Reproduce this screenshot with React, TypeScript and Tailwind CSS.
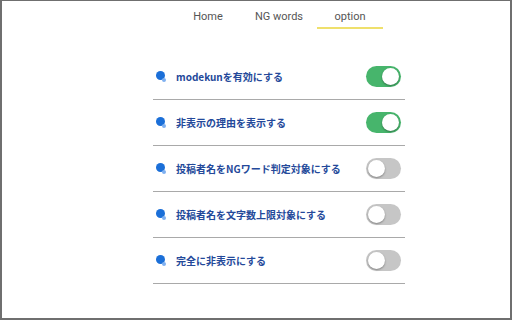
import { useState } from "react";

const options = [
  { label: "modekunを有効にする", on: true },
  { label: "非表示の理由を表示する", on: true },
  { label: "投稿者名をNGワード判定対象にする", on: false },
  { label: "投稿者名を文字数上限対象にする", on: false },
  { label: "完全に非表示にする", on: false },
];

const tabs = ["Home", "NG words", "option"];

export default function App() {
  const [values, setValues] = useState(options.map((o) => o.on));

  return (
    <div className="w-[512px] h-[320px] bg-white border-t border-l-2 border-r-2 border-b-2 border-[#6f6f6f] font-['Roboto','Noto_Sans_CJK_JP',sans-serif] overflow-hidden">
      <div className="ml-[151px] w-[252px]">
        {/* Tabs */}
        <div className="flex justify-center gap-[5px] h-[28px]">
          {tabs.map((t) => (
            <div
              key={t}
              className={`w-[66px] pt-[9px] text-center text-[11px] leading-[14px] text-[#555] ${
                t === "option" ? "border-b-2 border-[#efe06c]" : ""
              }`}
            >
              {t}
            </div>
          ))}
        </div>

        {/* Options */}
        <div className="mt-[25px]">
          {options.map((o, i) => (
            <div
              key={o.label}
              className="flex items-center h-[46px] border-b border-[#a9a9a9]"
            >
              <div className="relative w-[10px] h-[10px] ml-[3px] -mt-[2px]">
                <div className="w-[9px] h-[9px] rounded-full bg-[#1b6fd8]" />
                <div className="absolute left-[6px] top-[7px] w-[4px] h-[4px] rounded-full bg-[#7fb0f0]" />
              </div>
              <span className="ml-[10px] text-[10px] font-bold text-[#24499a] font-['Noto_Sans_CJK_JP',sans-serif]">
                {o.label}
              </span>
              <button
                onClick={() =>
                  setValues((v) => v.map((x, j) => (j === i ? !x : x)))
                }
                className={`ml-auto mr-[4px] w-[35px] h-[21px] rounded-full p-[2px] flex ${
                  values[i] ? "bg-[#47b56c] justify-end" : "bg-[#c6c6c6] justify-start"
                }`}
              >
                <span className="w-[17px] h-[17px] rounded-full bg-white shadow-[0_1px_2px_rgba(0,0,0,0.35)]" />
              </button>
            </div>
          ))}
        </div>
      </div>
    </div>
  );
}
